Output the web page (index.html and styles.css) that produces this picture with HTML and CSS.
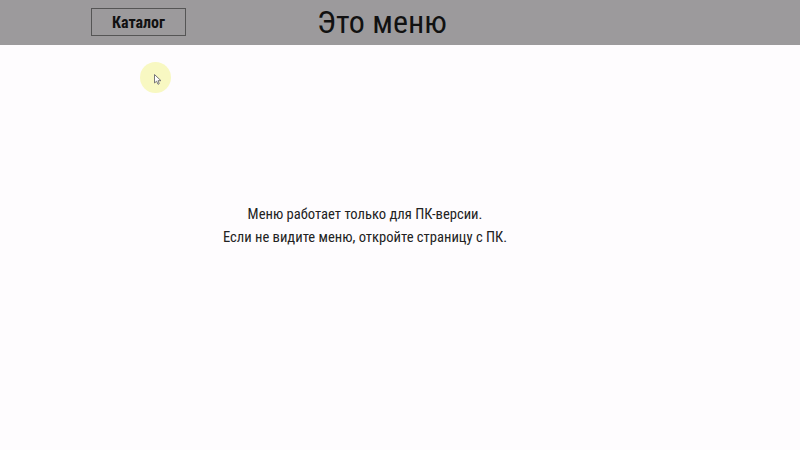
FILE: index.html
```html
<!DOCTYPE html>
<html lang="ru">
<head>
<meta charset="utf-8">
<title>Это меню</title>
<link rel="stylesheet" href="styles.css">
</head>
<body>
<header class="topbar">
  <button class="catalog-btn">Каталог</button>
  <h1 class="title">Это меню</h1>
</header>
<main class="content">
  <p class="notice">Меню работает только для ПК-версии.<br>Если не видите меню, откройте страницу с ПК.</p>
</main>
<div class="cursor-halo">
  <svg class="cursor" width="8" height="11" viewBox="0 0 8 11"><path d="M0.5 0.5 L0.5 9 L2.6 7.2 L4 10.3 L5.3 9.7 L4 6.7 L7 6.7 Z" fill="#fff" stroke="#777" stroke-width="1"/></svg>
</div>
</body>
</html>
```
FILE: styles.css
```css
html, body {
  margin: 0;
  padding: 0;
}
body {
  width: 800px;
  height: 450px;
  background: #fefcfe;
  font-family: Roboto, "Liberation Sans", sans-serif;
  font-stretch: 75%;
  color: #1e1e1e;
  position: relative;
  overflow: hidden;
}
.topbar {
  height: 45px;
  background: #9c9a9c;
  display: flex;
  align-items: center;
  padding-left: 91px;
  box-sizing: border-box;
}
.catalog-btn {
  width: 95px;
  height: 28px;
  margin-top: -1px;
  background: transparent;
  border: 1px solid #555;
  font-family: inherit;
  font-stretch: 75%;
  font-weight: 700;
  font-size: 16px;
  color: #111;
  padding: 0;
  cursor: pointer;
}
.title {
  margin: 0 0 0 131px;
  font-size: 32px;
  font-weight: 400;
  color: #111;
  line-height: 45px;
}
.content {
  padding-top: 158px;
  width: 730px;
}
.notice {
  margin: 0;
  text-align: center;
  font-size: 14.6px;
  line-height: 23px;
  color: #222;
}
.cursor-halo {
  position: absolute;
  left: 140px;
  top: 62px;
  width: 31px;
  height: 31px;
  border-radius: 50%;
  background: #f8f8c2;
}
.cursor {
  position: absolute;
  left: 14px;
  top: 12px;
}
```
